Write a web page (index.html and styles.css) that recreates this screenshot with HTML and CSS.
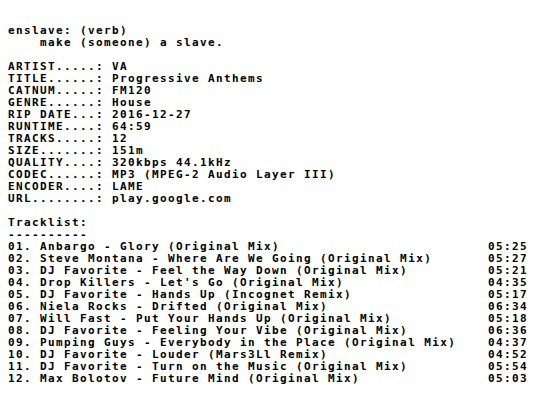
FILE: index.html
```html
<!DOCTYPE html>
<html>
<head>
<meta charset="utf-8">
<link rel="stylesheet" href="styles.css">
</head>
<body>
<main class="nfo">
  <section class="block">
    <p class="line">enslave: (verb)</p>
    <p class="line">    make (someone) a slave.</p>
  </section>
  <section class="block">
    <p class="line">ARTIST.....: VA</p>
    <p class="line">TITLE......: Progressive Anthems</p>
    <p class="line">CATNUM.....: FM120</p>
    <p class="line">GENRE......: House</p>
    <p class="line">RIP DATE...: 2016-12-27</p>
    <p class="line">RUNTIME....: 64:59</p>
    <p class="line">TRACKS.....: 12</p>
    <p class="line">SIZE.......: 151m</p>
    <p class="line">QUALITY....: 320kbps 44.1kHz</p>
    <p class="line">CODEC......: MP3 (MPEG-2 Audio Layer III)</p>
    <p class="line">ENCODER....: LAME</p>
    <p class="line">URL........: play.google.com</p>
  </section>
  <section class="block">
    <h2 class="line">Tracklist:</h2>
    <p class="line">----------</p>
    <ol class="tracks">
      <li class="track"><span>01. Anbargo - Glory (Original Mix)</span><span>05:25</span></li>
      <li class="track"><span>02. Steve Montana - Where Are We Going (Original Mix)</span><span>05:27</span></li>
      <li class="track"><span>03. DJ Favorite - Feel the Way Down (Original Mix)</span><span>05:21</span></li>
      <li class="track"><span>04. Drop Killers - Let's Go (Original Mix)</span><span>04:35</span></li>
      <li class="track"><span>05. DJ Favorite - Hands Up (Incognet Remix)</span><span>05:17</span></li>
      <li class="track"><span>06. Niela Rocks - Drifted (Original Mix)</span><span>06:34</span></li>
      <li class="track"><span>07. Will Fast - Put Your Hands Up (Original Mix)</span><span>05:18</span></li>
      <li class="track"><span>08. DJ Favorite - Feeling Your Vibe (Original Mix)</span><span>06:36</span></li>
      <li class="track"><span>09. Pumping Guys - Everybody in the Place (Original Mix)</span><span>04:37</span></li>
      <li class="track"><span>10. DJ Favorite - Louder (Mars3Ll Remix)</span><span>04:52</span></li>
      <li class="track"><span>11. DJ Favorite - Turn on the Music (Original Mix)</span><span>05:54</span></li>
      <li class="track"><span>12. Max Bolotov - Future Mind (Original Mix)</span><span>05:03</span></li>
    </ol>
  </section>
</main>
</body>
</html>
```
FILE: styles.css
```css
html, body {
  margin: 0;
  padding: 0;
  background: #ffffff;
}

body {
  padding: 25px 8px 8px 8px;
}

.nfo {
  font-family: "DejaVu Sans Mono", monospace;
  font-weight: bold;
  font-size: 11px;
  letter-spacing: 1.38px;
  line-height: 12px;
  color: #000000;
}

.block {
  margin: 0 0 12px 0;
}

.line {
  margin: 0;
  white-space: pre;
  font-size: inherit;
  font-weight: inherit;
  height: 12px;
}

.tracks {
  list-style: none;
  margin: 0;
  padding: 0;
}

.track {
  display: grid;
  grid-template-columns: 480px 40px;
  height: 12px;
  white-space: pre;
}
```
